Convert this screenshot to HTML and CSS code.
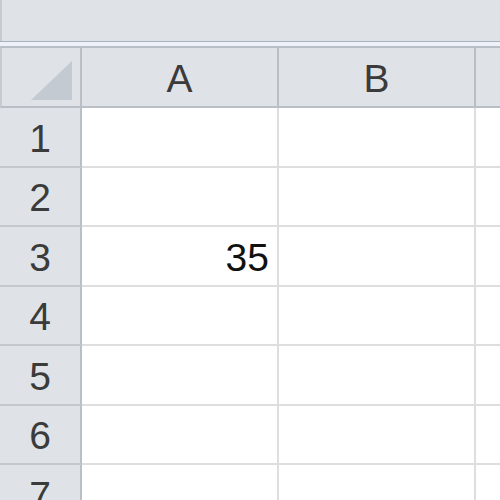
FILE: index.html
```html
<!DOCTYPE html>
<html lang="en">
<head>
  <meta charset="UTF-8" />
  <meta name="viewport" content="width=device-width, initial-scale=1.0" />
  <title>Sheet1</title>
  <link rel="stylesheet" href="styles.css">
</head>
<body>
  <div class="window">
    <div class="formula-area"></div>
    <div class="splitter"></div>
    <div class="sheet">
      <div class="corner">
        <svg width="41" height="39" viewBox="0 0 41 39"><polygon points="41,0 41,39 0,39" fill="#c4cad1" /></svg>
      </div>
      <div class="col-head">A</div>
      <div class="col-head">B</div>
      <div class="col-head"></div>

      <div class="row-head">1</div>
      <div class="cell"></div>
      <div class="cell"></div>
      <div class="cell"></div>

      <div class="row-head">2</div>
      <div class="cell"></div>
      <div class="cell"></div>
      <div class="cell"></div>

      <div class="row-head">3</div>
      <div class="cell number">35</div>
      <div class="cell"></div>
      <div class="cell"></div>

      <div class="row-head">4</div>
      <div class="cell"></div>
      <div class="cell"></div>
      <div class="cell"></div>

      <div class="row-head">5</div>
      <div class="cell"></div>
      <div class="cell"></div>
      <div class="cell"></div>

      <div class="row-head">6</div>
      <div class="cell"></div>
      <div class="cell"></div>
      <div class="cell"></div>

      <div class="row-head">7</div>
      <div class="cell"></div>
      <div class="cell"></div>
      <div class="cell"></div>
    </div>
  </div>
</body>
</html>
```

FILE: styles.css
```css
* {
  box-sizing: border-box;
}
body {
  margin: 0;
  background: #fff;
  font-family: 'Liberation Sans', Arial, sans-serif;
  overflow: hidden;
}
.window {
  width: 500px;
  height: 500px;
  overflow: hidden;
}
.formula-area {
  height: 41px;
  background: #dfe3e8;
  border-left: 2px solid #c6cbd2;
}
.splitter {
  height: 7px;
  background: #eef1f8;
  border-top: 1px solid #aab1bb;
  border-bottom: 2px solid #b9bfc7;
}
.sheet {
  display: grid;
  grid-template-columns: 82px 197px 197px 197px;
  grid-template-rows: 60px repeat(7, 59.5px);
}
.corner,
.col-head,
.row-head {
  background: #dfe3e8;
  color: #3b3b3b;
  font-size: 39px;
  border-right: 2px solid #b9bfc7;
  border-bottom: 2px solid #b9bfc7;
  display: flex;
  align-items: center;
  justify-content: center;
  padding-top: 4px;
}
.corner {
  align-items: flex-end;
  justify-content: flex-end;
  padding: 0 8px 6px 0;
  border-left: 2px solid #c6cbd2;
}
.row-head {
  border-bottom-color: #c3c8cf;
}
.cell {
  border-right: 2px solid #dcdee0;
  border-bottom: 2px solid #dcdee0;
  font-size: 39px;
  color: #111;
  display: flex;
  align-items: center;
  padding-top: 4px;
}
.cell.number {
  justify-content: flex-end;
  padding-right: 8px;
}
```
